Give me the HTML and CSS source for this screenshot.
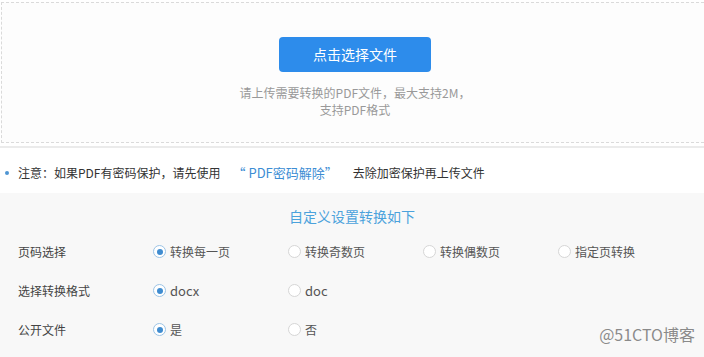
FILE: index.html
```html
<!DOCTYPE html>
<html lang="zh-CN">
  <head>
    <meta charset="UTF-8" />
    <meta name="viewport" content="width=device-width, initial-scale=1.0" />
    <title>PDF转Word</title>
    <link rel="stylesheet" href="styles.css">
  </head>

  <body>
    <div id="page">
      <!-- 上传区域 -->
      <div class="upload-wrap">
        <div class="upload-box">
          <a href="#" class="upload-btn">点击选择文件</a>
          <p class="upload-tip">请上传需要转换的PDF文件，最大支持2M，<br />支持PDF格式</p>
        </div>
      </div>

      <!-- 提示 -->
      <div class="notice">
        <i class="dot"></i>
        <span>注意：如果PDF有密码保护，请先使用</span>
        <a href="#" class="notice-link">“ PDF密码解除”</a>
        <span>去除加密保护再上传文件</span>
      </div>

      <!-- 设置 -->
      <div class="setting">
        <h3 class="setting-title">自定义设置转换如下</h3>

        <div class="row">
          <div class="row-label">页码选择</div>
          <label class="radio checked"><i></i>转换每一页</label>
          <label class="radio"><i></i>转换奇数页</label>
          <label class="radio"><i></i>转换偶数页</label>
          <label class="radio"><i></i>指定页转换</label>
        </div>

        <div class="row">
          <div class="row-label">选择转换格式</div>
          <label class="radio checked latin"><i></i>docx</label>
          <label class="radio latin"><i></i>doc</label>
        </div>

        <div class="row">
          <div class="row-label">公开文件</div>
          <label class="radio checked"><i></i>是</label>
          <label class="radio"><i></i>否</label>
        </div>
      </div>

      <div class="watermark">@51CTO博客</div>
    </div>
  </body>
</html>
```

FILE: styles.css
```css
* {
  margin: 0;
  padding: 0;
  box-sizing: border-box;
}

html,
body {
  height: 100%;
  overflow: hidden;
}

body {
  font-family: "Noto Sans CJK SC", "Noto Sans", sans-serif;
  font-size: 12px;
  color: #444;
  background-color: #fff;
}

#page {
  position: relative;
  width: 704px;
  height: 357px;
  overflow: hidden;
  background-color: #f8f8f8;
}

/* 上传区域 */
.upload-wrap {
  padding: 2px 0 3px 1px;
  background-color: #fff;
  border-bottom: 2px solid #ebebeb;
}

.upload-box {
  width: 708px;
  height: 141px;
  padding-top: 34px;
  border: 1px dashed #dadada;
  background-color: #fdfdfd;
  text-align: center;
}

.upload-btn {
  display: inline-block;
  width: 152px;
  height: 35px;
  line-height: 35px;
  border-radius: 4px;
  background-color: #2d8ceb;
  color: #fff;
  font-size: 14px;
  text-decoration: none;
}

.upload-tip {
  margin-top: 12px;
  line-height: 17px;
  color: #999;
}

/* 提示 */
.notice {
  display: flex;
  align-items: center;
  height: 45px;
  padding: 5px 0 0 5px;
  background-color: #fff;
  color: #333;
  line-height: 20px;
}

.notice .dot {
  width: 4px;
  height: 4px;
  margin-right: 9px;
  border-radius: 50%;
  background-color: #4f95d3;
}

.notice-link {
  margin: 0 15px 0 12px;
  font-size: 13px;
  color: #3c8dd4;
  text-decoration: none;
}

/* 设置 */
.setting {
  padding-top: 13px;
}

.setting-title {
  margin-bottom: 6px;
  font-size: 14px;
  font-weight: normal;
  line-height: 20px;
  text-align: center;
  color: #4ba2dc;
}

.row {
  display: flex;
  align-items: center;
  height: 39px;
  padding-left: 18px;
}

.row-label {
  width: 135px;
  color: #444;
}

.radio {
  display: flex;
  align-items: center;
  width: 135px;
  color: #555;
  cursor: pointer;
}

.radio.latin {
  font-size: 13px;
}

.radio i {
  display: flex;
  align-items: center;
  justify-content: center;
  width: 13px;
  height: 13px;
  margin-right: 4px;
  border: 1px solid #d6d6d6;
  border-radius: 50%;
  background-color: #fff;
}

.radio.checked i {
  border-color: #9cc4e6;
}

.radio.checked i::after {
  content: "";
  width: 6px;
  height: 6px;
  border-radius: 50%;
  background-color: #3f8cd0;
}

/* 水印 */
.watermark {
  position: absolute;
  right: 9px;
  bottom: 11px;
  font-family: "Noto Sans CJK SC", sans-serif;
  font-size: 16px;
  color: #8a8a8a;
  text-shadow: 0 0 1px #fff;
}
```
